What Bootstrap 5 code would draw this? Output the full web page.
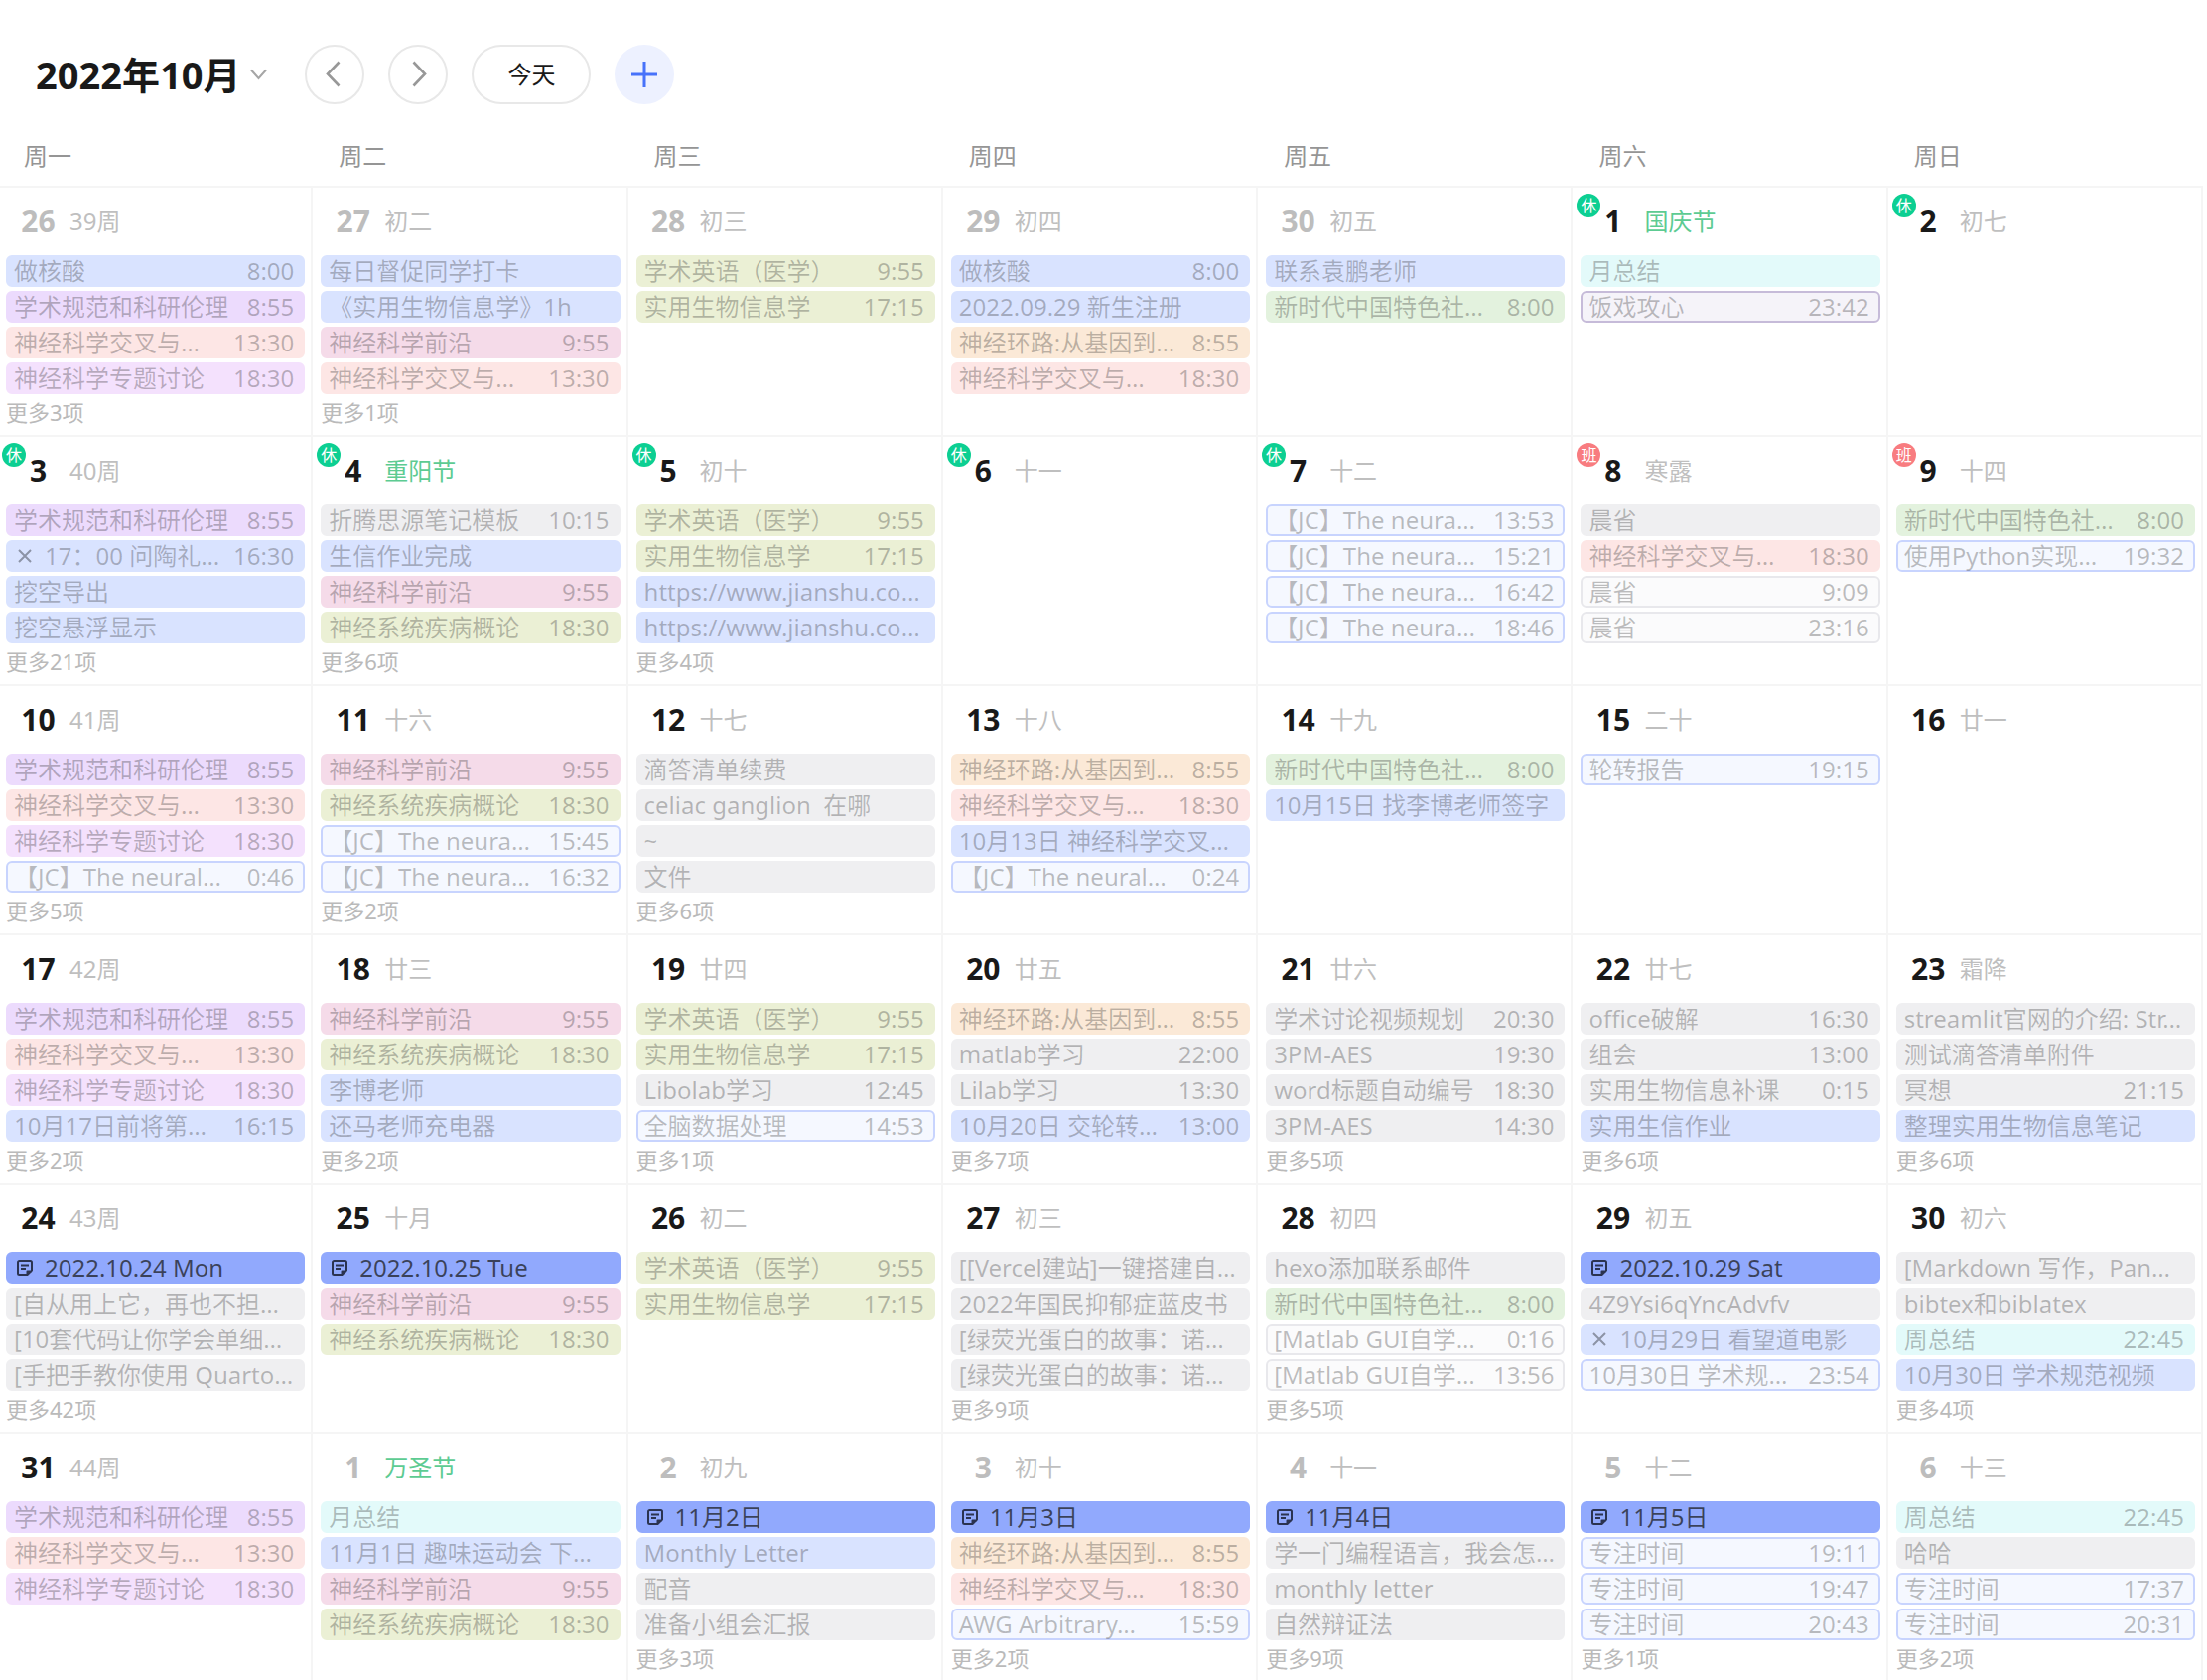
<!DOCTYPE html>
<html lang="zh-CN">
<head>
<meta charset="utf-8">
<meta name="viewport" content="width=device-width, initial-scale=1">
<title>2022年10月</title>
<link href="https://cdn.jsdelivr.net/npm/bootstrap@5.3.0/dist/css/bootstrap.min.css" rel="stylesheet">
<style>
  body { font-family: "Noto Sans", "Noto Sans CJK SC", sans-serif; font-size: 24px; line-height: 32px; color: #191919; background: #fff; }
  .toolbar { padding: 45px 36px 0; gap: 24px; }
  .month-btn { font-size: 38px; line-height: 60px; font-weight: 700; color: #191919; gap: 10px; margin-right: 14px; }
  .tool-btn { height: 60px; min-width: 60px; font-size: 24px; line-height: 32px; border: 2px solid #e8e8e8; color: #191919; }
  .tool-btn.today-btn { min-width: 120px; }
  .tool-btn.add-btn { background: #edf1ff; border-color: #edf1ff; }
  .month-grid { margin: 0 4px -3px -2px; }
  .weekdays { border-bottom: 2px solid #f5f5f5; }
  .weekday { padding: 34px 0 12px 26px; line-height: 36px; color: #959595; }
  .day { border-right: 2px solid #f5f5f5; border-bottom: 2px solid #f5f5f5; padding: 0 6px 0 8px; min-width: 0; }
  .day-head { height: 68px; padding-left: 15px; gap: 14px; }
  .day-num { width: 35px; font-size: 30px; font-weight: 700; }
  .day-note { color: #bfbfbf; }
  .day-note.festival { color: #5dcb92; }
  .outside .day-num { color: #bdbdbd; }
  .mark-dot { left: 4px; top: 6px; width: 24px; height: 24px; font-size: 16px; line-height: 24px; color: #fff; background: #0ccf92; }
  .mark-dot.work { background: #f87c80; }
  .event { height: 32px; line-height: 28px; margin-bottom: 4px; padding: 0 9px 0 6px; border: 2px solid transparent; border-radius: 6px; color: rgba(25, 25, 25, .28); }
  .event svg { width: 22px; height: 22px; margin-right: 9px; }
  .ev-blue { background-color: #d9e3ff; border-color: #d9e3ff; }
  .ev-purple { background-color: #ecdbfd; border-color: #ecdbfd; }
  .ev-salmon { background-color: #fde6e5; border-color: #fde6e5; }
  .ev-lilac { background-color: #f4e1fd; border-color: #f4e1fd; }
  .ev-pink { background-color: #f5dbe9; border-color: #f5dbe9; }
  .ev-olive { background-color: #ebf0d5; border-color: #ebf0d5; }
  .ev-orange { background-color: #fbe9d7; border-color: #fbe9d7; }
  .ev-green { background-color: #e3f2de; border-color: #e3f2de; }
  .ev-grey { background-color: #efeff1; border-color: #efeff1; }
  .ev-cyan { background-color: #e3fafa; border-color: #e3fafa; }
  .ev-note { background-color: #91a9fd; border-color: #91a9fd; color: rgba(25, 25, 25, .72); }
  .ev-focus { background-color: #f5f8ff; border-color: #c8d4fe; }
  .ev-plain { background-color: #fbfbfc; border-color: #e8e8ec; }
  .ev-violet { background-color: #f5f3f9; border-color: #c6bbd9; }
  .more-btn { font-size: 22px; line-height: 28px; color: #bababa; }
</style>
</head>
<body>
<main class="d-flex flex-column min-vh-100 overflow-hidden">
  <header class="toolbar d-flex align-items-center">
    <button type="button" class="month-btn btn p-0 border-0 d-flex align-items-center">2022年10月
      <svg width="17" height="12" viewBox="0 0 17 12" fill="none" stroke="#a6a6a6" stroke-width="2" aria-hidden="true"><path d="M1 1.500l7.500 8.500L16 1.500"/></svg>
    </button>
    <button type="button" class="tool-btn btn rounded-pill p-0 d-flex align-items-center justify-content-center" aria-label="上个月">
      <svg width="24" height="28" viewBox="0 0 24 28" fill="none" stroke="#989898" stroke-width="2.600" aria-hidden="true"><path d="M16.500 1.500L5 13.500l11.500 12"/></svg>
    </button>
    <button type="button" class="tool-btn btn rounded-pill p-0 d-flex align-items-center justify-content-center" aria-label="下个月">
      <svg width="24" height="28" viewBox="0 0 24 28" fill="none" stroke="#989898" stroke-width="2.600" aria-hidden="true"><path d="M7.500 1.500L19 13.500l-11.500 12"/></svg>
    </button>
    <button type="button" class="tool-btn today-btn btn rounded-pill p-0">今天</button>
    <button type="button" class="tool-btn add-btn btn rounded-pill p-0 d-flex align-items-center justify-content-center" aria-label="添加">
      <svg width="28" height="28" viewBox="0 0 28 28" fill="none" stroke="#4772fa" stroke-width="3" aria-hidden="true"><path d="M14 1v26M1 14h26"/></svg>
    </button>
  </header>
  <section class="month-grid d-flex flex-column flex-grow-1" id="month"></section>
</main>
<script src="https://cdn.jsdelivr.net/npm/bootstrap@5.3.0/dist/js/bootstrap.bundle.min.js"></script>
<script>
  const weekdays = ['周一', '周二', '周三', '周四', '周五', '周六', '周日'];

  // One line per day: number|note|flags|hidden count, then "kind|title|time" entries.
  // Flags: o outside the month, h festival name, r rest day, w working day.
  const A = 'purple|学术规范和科研伦理|8:55', B = 'salmon|神经科学交叉与…|13:30', C = 'lilac|神经科学专题讨论|18:30';
  const D = 'pink|神经科学前沿|9:55', E = 'olive|神经系统疾病概论|18:30';
  const F = 'olive|学术英语（医学）|9:55', G = 'olive|实用生物信息学|17:15';
  const H = 'orange|神经环路:从基因到…|8:55', I = 'salmon|神经科学交叉与…|18:30', J = 'green|新时代中国特色社…|8:00';
  const days = [
    ['26|39周|o|3', 'blue|做核酸|8:00', A, B, C],
    ['27|初二|o|1', 'blue|每日督促同学打卡', 'blue|《实用生物信息学》1h', D, B],
    ['28|初三|o|', F, G],
    ['29|初四|o|', 'blue|做核酸|8:00', 'blue|2022.09.29 新生注册', H, I],
    ['30|初五|o|', 'blue|联系袁鹏老师', J],
    ['1|国庆节|hr|', 'cyan|月总结', 'violet|饭戏攻心|23:42'],
    ['2|初七|r|'],

    ['3|40周|r|21', A, 'blue|17：00 问陶礼…|16:30|x', 'blue|挖空导出', 'blue|挖空悬浮显示'],
    ['4|重阳节|hr|6', 'grey|折腾思源笔记模板|10:15', 'blue|生信作业完成', D, E],
    ['5|初十|r|4', F, G, 'blue|https://www.jianshu.co…', 'blue|https://www.jianshu.co…'],
    ['6|十一|r|'],
    ['7|十二|r|', 'focus|【JC】The neura…|13:53', 'focus|【JC】The neura…|15:21', 'focus|【JC】The neura…|16:42', 'focus|【JC】The neura…|18:46'],
    ['8|寒露|w|', 'grey|晨省', I, 'plain|晨省|9:09', 'plain|晨省|23:16'],
    ['9|十四|w|', J, 'focus|使用Python实现…|19:32'],

    ['10|41周||5', A, B, C, 'focus|【JC】The neural…|0:46'],
    ['11|十六||2', D, E, 'focus|【JC】The neura…|15:45', 'focus|【JC】The neura…|16:32'],
    ['12|十七||6', 'grey|滴答清单续费', 'grey|celiac ganglion&nbsp; 在哪', 'grey|~', 'grey|文件'],
    ['13|十八||', H, I, 'blue|10月13日 神经科学交叉…', 'focus|【JC】The neural…|0:24'],
    ['14|十九||', J, 'blue|10月15日 找李博老师签字'],
    ['15|二十||', 'focus|轮转报告|19:15'],
    ['16|廿一||'],

    ['17|42周||2', A, B, C, 'blue|10月17日前将第…|16:15'],
    ['18|廿三||2', D, E, 'blue|李博老师', 'blue|还马老师充电器'],
    ['19|廿四||1', F, G, 'grey|Libolab学习|12:45', 'focus|全脑数据处理|14:53'],
    ['20|廿五||7', H, 'grey|matlab学习|22:00', 'grey|Lilab学习|13:30', 'blue|10月20日 交轮转…|13:00'],
    ['21|廿六||5', 'grey|学术讨论视频规划|20:30', 'grey|3PM-AES|19:30', 'grey|word标题自动编号|18:30', 'grey|3PM-AES|14:30'],
    ['22|廿七||6', 'grey|office破解|16:30', 'grey|组会|13:00', 'grey|实用生物信息补课|0:15', 'blue|实用生信作业'],
    ['23|霜降||6', 'grey|streamlit官网的介绍: Str…', 'grey|测试滴答清单附件', 'grey|冥想|21:15', 'blue|整理实用生物信息笔记'],

    ['24|43周||42', 'note|2022.10.24 Mon||n', 'grey|[自从用上它，再也不担…', 'grey|[10套代码让你学会单细…', 'grey|[手把手教你使用 Quarto…'],
    ['25|十月||', 'note|2022.10.25 Tue||n', D, E],
    ['26|初二||', F, G],
    ['27|初三||9', 'grey|[[Vercel建站]一键搭建自…', 'grey|2022年国民抑郁症蓝皮书', 'grey|[绿荧光蛋白的故事：诺…', 'grey|[绿荧光蛋白的故事：诺…'],
    ['28|初四||5', 'grey|hexo添加联系邮件', J, 'plain|[Matlab GUI自学…|0:16', 'plain|[Matlab GUI自学…|13:56'],
    ['29|初五||', 'note|2022.10.29 Sat||n', 'grey|4Z9Ysi6qYncAdvfv', 'blue|10月29日 看望道电影||x', 'focus|10月30日 学术规…|23:54'],
    ['30|初六||4', 'grey|[Markdown 写作，Pan…', 'grey|bibtex和biblatex', 'cyan|周总结|22:45', 'blue|10月30日 学术规范视频'],

    ['31|44周||', A, B, C],
    ['1|万圣节|oh|', 'cyan|月总结', 'blue|11月1日 趣味运动会 下…', D, E],
    ['2|初九|o|3', 'note|11月2日||n', 'blue|Monthly Letter', 'grey|配音', 'grey|准备小组会汇报'],
    ['3|初十|o|2', 'note|11月3日||n', H, I, 'focus|AWG Arbitrary…|15:59'],
    ['4|十一|o|9', 'note|11月4日||n', 'grey|学一门编程语言，我会怎…', 'grey|monthly letter', 'grey|自然辩证法'],
    ['5|十二|o|1', 'note|11月5日||n', 'focus|专注时间|19:11', 'focus|专注时间|19:47', 'focus|专注时间|20:43'],
    ['6|十三|o|2', 'cyan|周总结|22:45', 'grey|哈哈', 'focus|专注时间|17:37', 'focus|专注时间|20:31']
  ];

  const icons = {
    n: '<svg class="flex-shrink-0" viewBox="0 0 22 22" fill="none" stroke="#2b3350" stroke-width="2" stroke-linejoin="round" aria-hidden="true"><path d="M13.500 18H5.500A1.500 1.500 0 0 1 4 16.500v-11A1.500 1.500 0 0 1 5.500 4h11A1.500 1.500 0 0 1 18 5.500v8zM13.500 18v-3.500h4.500"/><path d="M7 8.500h8M7 12h5"/></svg>',
    x: '<svg class="flex-shrink-0" viewBox="0 0 22 22" fill="none" stroke="#8c93a6" stroke-width="2" aria-hidden="true"><path d="M5 5l12 12M17 5L5 17"/></svg>'
  };

  const eventItem = text => {
    const [kind, title, time, icon] = text.split('|');
    return `<li class="event ev-${kind} d-flex align-items-center">${icons[icon] || ''}<span class="flex-grow-1 text-nowrap">${title}</span>${time ? `<time>${time}</time>` : ''}</li>`;
  };

  const dayCell = ([head, ...events]) => {
    const [num, note, flags, more] = head.split('|');
    const dot = flags.includes('r') ? '<span class="mark-dot position-absolute rounded-circle text-center">休</span>'
      : flags.includes('w') ? '<span class="mark-dot work position-absolute rounded-circle text-center">班</span>' : '';
    return `<div class="day col position-relative${flags.includes('o') ? ' outside' : ''}">${dot}
      <div class="day-head d-flex align-items-center"><span class="day-num text-center">${num}</span><span class="day-note${flags.includes('h') ? ' festival' : ''}">${note}</span></div>
      <ul class="list-unstyled m-0">${events.map(eventItem).join('')}</ul>
      ${more ? `<button type="button" class="more-btn btn p-0 border-0 d-block">更多${more}项</button>` : ''}</div>`;
  };

  let html = `<div class="weekdays row g-0">${weekdays.map(d => `<div class="weekday col">${d}</div>`).join('')}</div>`;
  for (let i = 0; i < days.length; i += 7) {
    html += `<div class="row g-0 flex-fill">${days.slice(i, i + 7).map(dayCell).join('')}</div>`;
  }
  document.getElementById('month').innerHTML = html;
</script>
</body>
</html>
